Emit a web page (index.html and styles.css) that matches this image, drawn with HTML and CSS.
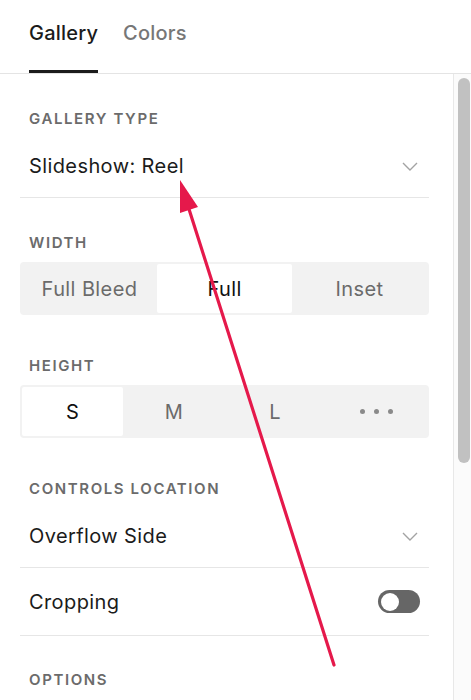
FILE: index.html
```html
<!doctype html>
<html>
<head>
<meta charset="utf-8">
<link rel="stylesheet" href="styles.css">
<title>Gallery settings</title>
</head>
<body>
<div class="tabs">
    <span class="tab active">Gallery</span>
    <span class="tab">Colors</span>
</div>

<div class="main">
    <div class="panel">
        <div class="label">Gallery Type</div>
        <div class="row select">
            <span>Slideshow: Reel</span>
            <svg class="chevron" width="16" height="9" viewBox="0 0 16 9"><path d="M1 1l7 7 7-7" fill="none" stroke="#a3a3a3" stroke-width="1.4"/></svg>
        </div>

        <div class="label">Width</div>
        <div class="segmented">
            <span class="seg">Full Bleed</span>
            <span class="seg on">Full</span>
            <span class="seg">Inset</span>
        </div>

        <div class="label">Height</div>
        <div class="segmented">
            <span class="seg on">S</span>
            <span class="seg">M</span>
            <span class="seg">L</span>
            <span class="seg"><i class="dot"></i><i class="dot"></i><i class="dot"></i></span>
        </div>

        <div class="label">Controls Location</div>
        <div class="row select">
            <span>Overflow Side</span>
            <svg class="chevron" width="16" height="9" viewBox="0 0 16 9"><path d="M1 1l7 7 7-7" fill="none" stroke="#a3a3a3" stroke-width="1.4"/></svg>
        </div>
        <div class="row toggle-row">
            <span>Cropping</span>
            <span class="toggle"><span class="knob"></span></span>
        </div>

        <div class="label">Options</div>
    </div>
    <div class="scrollbar"><div class="thumb"></div></div>
</div>

<svg class="arrow" width="471" height="700" viewBox="0 0 471 700">
    <line x1="334" y1="665" x2="188" y2="206" stroke="#e5194b" stroke-width="3.2" stroke-linecap="round"/>
    <polygon points="180,180 198,207 180,213" fill="#e5194b"/>
</svg>
</body>
</html>
```

FILE: styles.css
```css
html,
body {
    margin: 0;
    padding: 0;
}
body {
    width: 471px;
    height: 700px;
    overflow: hidden;
    position: relative;
    font-family: Inter, "Open Sans", sans-serif;
    color: #1b1b1b;
    background: #fff;
}
.tabs {
    height: 73px;
    border-bottom: 1px solid #e4e4e4;
    display: flex;
    gap: 25px;
    padding-left: 29px;
}
.tab {
    font-size: 20px;
    font-weight: 500;
    letter-spacing: 0.2px;
    color: #777;
    padding-top: 21px;
    box-sizing: border-box;
    height: 73px;
    line-height: 24px;
}
.tab.active {
    color: #1b1b1b;
    border-bottom: 3px solid #1b1b1b;
}
.main {
    display: flex;
    height: 626px;
}
.panel {
    width: 453px;
    padding: 35px 24px 0 20px;
    box-sizing: border-box;
}
.label {
    font-size: 15px;
    font-weight: 600;
    line-height: 20px;
    letter-spacing: 1.6px;
    text-transform: uppercase;
    color: #6b6b6b;
    padding-left: 9px;
}
.row {
    display: flex;
    align-items: center;
    justify-content: space-between;
    padding: 0 11px 0 9px;
    border-bottom: 1px solid #e6e6e6;
    font-size: 20px;
    letter-spacing: 0.4px;
}
.select {
    height: 62px;
    margin-top: 6px;
    margin-bottom: 35px;
}
.toggle-row {
    height: 67px;
    margin-bottom: 34px;
}
.toggle-row .toggle {
    margin-right: -2px;
}
.select + .toggle-row {
    margin-top: -35px;
}
.segmented {
    display: flex;
    background: #f2f2f2;
    border-radius: 4px;
    padding: 2px;
    height: 53px;
    box-sizing: border-box;
    margin: 9px 0 41px 0;
}
.seg {
    flex: 1;
    display: flex;
    align-items: center;
    justify-content: center;
    font-size: 20px;
    letter-spacing: 0.4px;
    color: #6b6b6b;
    border-radius: 2px;
}
.seg.on {
    background: #fff;
    color: #111;
}
.dot {
    width: 5px;
    height: 5px;
    border-radius: 50%;
    background: #8a8a8a;
    margin: 0 4.5px;
}
.toggle {
    width: 42px;
    height: 23px;
    border-radius: 12px;
    background: #666;
    padding: 2px 3px;
    box-sizing: border-box;
    display: flex;
    align-items: center;
}
.knob {
    width: 18px;
    height: 18px;
    border-radius: 50%;
    background: #fff;
}
.scrollbar {
    width: 18px;
    border-left: 1px solid #e8e8e8;
    background: #fbfbfb;
    padding: 4px 1px 0 4px;
    box-sizing: border-box;
}
.thumb {
    width: 12px;
    height: 385px;
    border-radius: 6px;
    background: #c1c1c1;
}
.arrow {
    position: absolute;
    left: 0;
    top: 0;
    pointer-events: none;
}
```
